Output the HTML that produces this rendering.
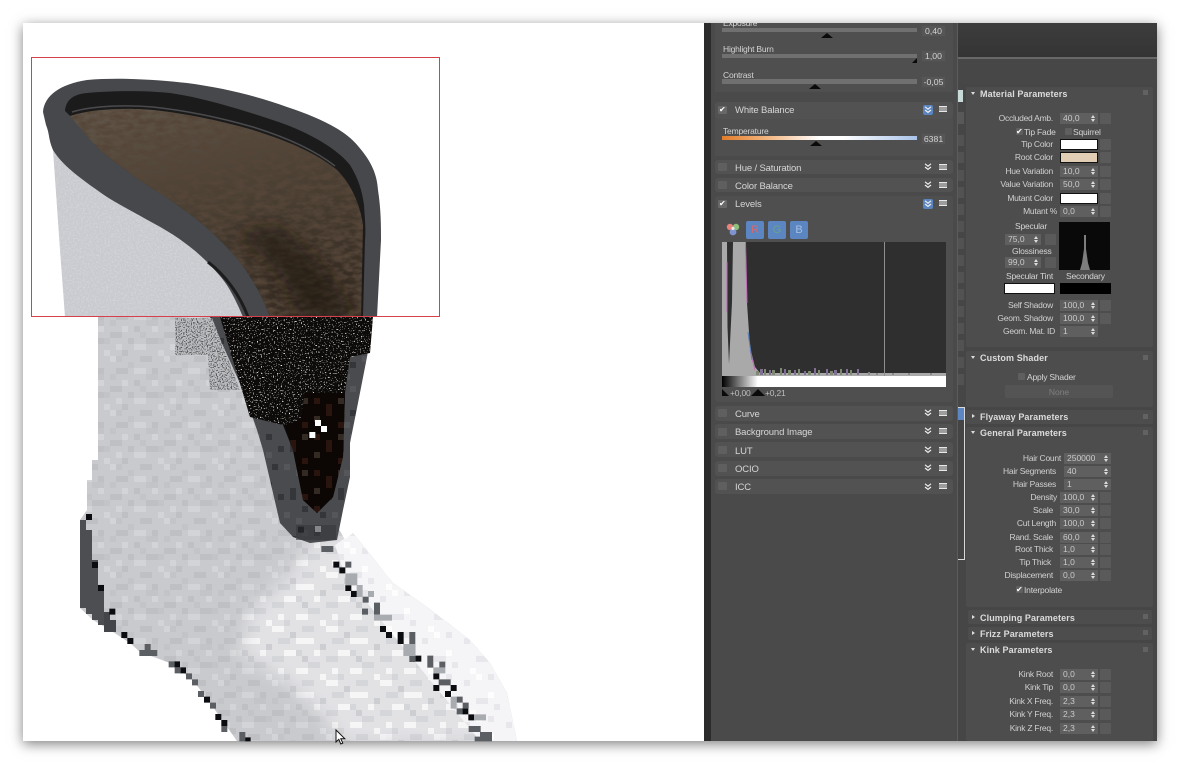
<!DOCTYPE html>
<html><head><meta charset="utf-8"><style>
html,body{margin:0;padding:0;background:#fff;width:1180px;height:765px;overflow:hidden}
#w{position:absolute;left:23px;top:23px;width:1134px;height:718px;box-shadow:0 3px 12px rgba(0,0,0,.5);background:#fff}
#r{position:absolute;left:0;top:0;width:1180px;height:765px;overflow:hidden;font:9px/12px "Liberation Sans",sans-serif;color:#d8d8d8}
#r div,#r i,#r b,#r span,#r u{position:absolute;display:block;font-style:normal;text-decoration:none;white-space:nowrap}
.hd{left:715px;width:238px;height:17px;background:#525252;border-radius:3px}
.ck{left:718px;width:9px;height:8px;background:#5f5f5f;border-radius:1px}
.t{left:735px;font-size:9.5px!important;letter-spacing:-.15px;color:#d6d6d6}
.ch{position:absolute;left:924px;width:8px;height:8px}
.ham{left:939px;width:8px;height:6px;background:repeating-linear-gradient(#e8e8e8 0 1.3px,transparent 1.3px 2.3px)}
.act{left:923px;width:10px;height:10px;background:#5b85bf;border-radius:2px}
.sl{left:722px;width:195px;height:4.5px;background:#707070}
.v{left:921px;width:25px;height:12px;background:#565656;border:1px solid #505050;box-sizing:border-box;text-align:center;line-height:11px!important;font-size:8.7px!important;color:#d4d4d4}
.tr{width:0;height:0;border-left:6px solid transparent;border-right:6px solid transparent;border-bottom:5px solid #0a0a0a}
.lb{color:#d4d4d4;font-size:8.5px!important;letter-spacing:-.2px}
.p{left:966px;width:187px;background:#4d4d4d;border-radius:2px}
.h{left:980px;font-weight:bold;font-size:9px!important;color:#dcdcdc;letter-spacing:.1px}
.a{left:971px;width:0;height:0;border-left:2.5px solid transparent;border-right:2.5px solid transparent;border-top:3px solid #ddd}
.c{left:972px;width:0;height:0;border-top:2.5px solid transparent;border-bottom:2.5px solid transparent;border-left:3px solid #ddd}
.g{left:1143px;width:5px;height:5px;background:#626262}
.l{left:950px;width:103px;text-align:right;color:#d0d0d0;font-size:8.5px!important;letter-spacing:-.25px}
.s{left:1060px;width:38px;height:11px;background:#5f5f5f;color:#cacaca;padding-left:3px;box-sizing:border-box;line-height:11px!important;font-size:8.5px!important}
.s:before{content:"";position:absolute;right:3px;top:2px;border-left:2px solid transparent;border-right:2px solid transparent;border-bottom:3px solid #ddd}
.s:after{content:"";position:absolute;right:3px;top:6px;border-left:2px solid transparent;border-right:2px solid transparent;border-top:3px solid #ddd}
.q{left:1100px;width:11px;height:11px;background:#5a5a5a;border-radius:1px}
.sw{left:1060px;width:36px;height:9px;background:#fff;border:1px solid #111}
.b{width:18px;height:18px;background:#5b86c2;border-radius:2px;text-align:center;line-height:18px!important;font-size:11px!important}
</style></head><body>
<div id="w"></div>
<svg width="1180" height="765" style="position:absolute;left:0;top:0" xmlns="http://www.w3.org/2000/svg">
<defs>
<symbol id="chev" viewBox="0 0 8 8"><path d="M1 .8l3 2.4 3-2.4M1 4l3 2.4 3-2.4" stroke="#eee" stroke-width="1.2" fill="none"/></symbol>
<filter id="fn" x="0" y="0" width="100%" height="100%"><feTurbulence type="fractalNoise" baseFrequency=".09 .2" numOctaves="3" seed="8"/><feColorMatrix values="0 0 0 0 .09  0 0 0 0 .06  0 0 0 0 .04  2.6 0 0 0 -.85"/></filter>
<filter id="gn" x="0" y="0" width="100%" height="100%"><feTurbulence type="fractalNoise" baseFrequency=".6" numOctaves="2" seed="3"/><feColorMatrix values="0 0 0 0 1  0 0 0 0 1  0 0 0 0 1  1.5 0 0 0 -.65"/></filter>
<filter id="sp" x="0" y="0" width="100%" height="100%"><feTurbulence type="fractalNoise" baseFrequency=".75" numOctaves="1" seed="5"/><feColorMatrix values="0 0 0 0 .95  0 0 0 0 .93  0 0 0 0 .88  10 0 0 0 -6.2"/></filter>
<filter id="sw" x="0" y="0" width="100%" height="100%"><feTurbulence type="fractalNoise" baseFrequency=".8" numOctaves="1" seed="9"/><feColorMatrix values="0 0 0 0 .1  0 0 0 0 .1  0 0 0 0 .1  8 0 0 0 -4"/></filter>
<filter id="bl" x="-20%" y="-20%" width="140%" height="140%"><feGaussianBlur stdDeviation="9"/></filter>
<pattern id="pa" width="54" height="54" patternUnits="userSpaceOnUse" x="2" y="2">
<rect width="54" height="54" fill="#c9cacd"/>
<path fill="#bfc0c4" d="M0 6h12v6H0zM24 0h6v6h-6zM36 12h12v6H36zM12 24h6v6h-6zM30 30h12v6H30zM6 42h12v6H6zM42 42h6v6h-6zM18 12h6v6h-6z"/>
<path fill="#d3d4d7" d="M12 0h6v6h-6zM42 0h6v6h-6zM24 18h12v6H24zM0 30h6v6H0zM48 24h6v6h-6zM24 42h12v6H24zM6 18h6v6H6z"/>
<path fill="#c3c4c8" d="M30 6h6v6h-6zM6 30h6v6H6zM18 36h6v6h-6zM36 48h12v6H36zM48 12h6v6h-6zM0 48h6v6H0z"/>
</pattern>
<pattern id="pb" width="54" height="54" patternUnits="userSpaceOnUse" x="2" y="2">
<rect width="54" height="54" fill="#e2e2e5"/>
<path fill="#d5d6d9" d="M0 6h12v6H0zM24 0h6v6h-6zM36 12h12v6H36zM12 24h6v6h-6zM30 30h12v6H30zM6 42h12v6H6z"/>
<path fill="#f6f6f7" d="M12 0h12v6H12zM42 0h6v6h-6zM24 18h12v6H24zM0 30h12v6H0zM48 24h6v6h-6zM24 42h18v6H24zM6 18h6v6H6z"/>
<path fill="#cdced2" d="M30 6h6v6h-6zM18 36h6v6h-6zM48 48h6v6h-6z"/>
</pattern>
<pattern id="pe" width="42" height="42" patternUnits="userSpaceOnUse" x="2" y="2">
<rect width="42" height="42" fill="#f5f5f7"/>
<path fill="#e8e8ec" d="M0 6h6v6H0zM24 0h6v6h-6zM12 24h12v6H12zM30 30h6v6h-6z"/>
<path fill="#fdfdfd" d="M12 0h6v6h-6zM24 18h6v6h-6zM6 36h6v6H6z"/>
</pattern>
<pattern id="pc" width="48" height="48" patternUnits="userSpaceOnUse" x="2" y="2">
<rect width="48" height="48" fill="#4a4b4e"/>
<path fill="#35363a" d="M0 6h6v12H0zM24 0h6v6h-6zM36 12h6v6h-6zM12 24h6v6h-6zM30 30h6v6h-6z"/>
<path fill="#55565a" d="M12 0h6v6h-6zM24 18h6v6h-6zM6 36h6v6H6zM42 30h6v6h-6z"/>
</pattern>
<pattern id="pd" width="36" height="36" patternUnits="userSpaceOnUse" x="2" y="2">
<rect width="36" height="36" fill="#0c0605"/>
<path fill="#2a150e" d="M0 6h6v12H0zM24 0h6v6h-6zM12 24h6v6h-6z"/>
<path fill="#332a24" d="M12 0h6v6h-6zM24 18h6v6h-6z"/>
</pattern>
<linearGradient id="fg" x1="0" y1="0" x2=".35" y2="1"><stop offset="0" stop-color="#62574a"/><stop offset=".45" stop-color="#4e4336"/><stop offset="1" stop-color="#3a2f25"/></linearGradient>
<clipPath id="cf"><path d="M70 116C95 108 130 108 153 110C190 114 225 122 253 130C285 140 315 152 337 170C352 185 360 205 363 225L361 317L270 317C262 295 253 280 240 262C225 244 205 224 180 207C160 192 142 183 130 173C115 162 105 155 97 147C85 135 78 125 70 116Z"/></clipPath>
<clipPath id="cl"><path d="M53 150L97 175L153 205L220 260L250 317H65L60 250Z"/></clipPath>
<clipPath id="cb"><path d="M220 317L250 417L283 425L293 450L303 500L317 513L333 497L343 457L345 393L350 357L370 353L373 317Z"/></clipPath>
<clipPath id="cw"><path d="M175 318V355H208L210 390H240L212 318Z"/></clipPath>
<clipPath id="boot"><path d="M98 317H220L345 540L353 533L377 563L393 583L427 607L470 640L490 663L507 693L517 741H237L227 727L210 703L193 680L170 663L140 652L130 643L113 632L93 620L80 608V520L87 510V480L92 480V460L98 460Z"/></clipPath>
<mask id="lm" maskUnits="userSpaceOnUse" x="180" y="500" width="360" height="260"><rect x="180" y="500" width="360" height="260" fill="#000"/><path fill="#fff" filter="url(#bl)" d="M305 545L360 525L530 700V745H345L320 715L285 680L240 655L250 610L290 575Z"/></mask>
</defs>
<!-- lower boot -->
<path fill="url(#pa)" d="M98 317H220L345 540L353 533L377 563L393 583L427 607L470 640L490 663L507 693L517 741H237L227 727L210 703L193 680L170 663L140 652L130 643L113 632L93 620L80 608V520L87 510V480L92 480V460L98 460Z"/>
<g clip-path="url(#boot)"><rect x="180" y="500" width="360" height="260" fill="url(#pb)" mask="url(#lm)"/>
<path fill="url(#pe)" d="M335 545L353 533L377 563L393 583L427 607L470 640L490 663L507 693L517 741H480L430 680L385 625L345 575Z"/></g>
<path fill="url(#pc)" d="M210 317L243 390L257 430L263 450L273 493L280 523L293 537L310 543L337 540L343 510L350 477L350 443L357 408L367 357L373 317Z"/>
<g clip-path="url(#cb)"><rect x="215" y="317" width="160" height="230" fill="#0d0b0a"/><rect x="215" y="317" width="160" height="108" filter="url(#sp)"/></g>
<path fill="url(#pd)" d="M285 425L293 450L303 500L317 513L333 497L343 457L345 393L305 393L300 420Z"/>
<g clip-path="url(#cw)"><rect x="170" y="317" width="75" height="75" fill="#bdbec2"/><rect x="170" y="317" width="75" height="75" filter="url(#sw)"/></g>
<path fill="#4d4e51" d="M80 520h6v88h-6zM86 530h6v84h-6zM92 560h6v60h-6zM98 585h6v40h-6z"/>
<path fill="#44454a" d="M104 612h6v20h-6zM110 620h6v12h-6z"/>
<!-- seam pixels (zoom coords) -->
<g transform="translate(60 510) scale(.33333)">
<path fill="#0a0c10" d="M78 12h18v18H78zM96 156h18v18H96zM114 225h18v18h-18zM148 296h18v18h-18zM184 366h18v18h-18zM202 384h18v18h-18zM342 454h18v18h-18zM360 472h18v18h-18zM432 560h18v18h-18zM466 612h18v18h-18zM484 630h18v18h-18zM554 682h18v12h-18zM820 155h18v18h-18zM838 172h18v18h-18zM856 225h18v18h-18zM873 243h18v18h-18zM960 348h18v18h-18zM978 366h18v18h-18zM1013 366h18v36h-18zM1066 437h18v18h-18zM1120 490h18v18h-18zM1120 525h18v18h-18zM1155 543h18v18h-18zM1172 525h18v18h-18zM1207 595h18v18h-18zM1225 613h18v18h-18zM714 50h18v18h-18z"/>
<path fill="#5b5e63" d="M254 402h18v18h-18zM238 420h54v18h-54zM326 454h18v18h-18zM344 472h18v18h-18zM378 490h18v18h-18zM396 508h18v18h-18zM414 543h18v18h-18zM450 578h18v18h-18zM484 648h18v18h-18zM538 666h18v28h-18zM856 155h18v18h-18zM908 260h18v18h-18zM942 278h18v36h-18zM906 296h18v18h-18zM1048 366h18v54h-18zM1048 420h18v36h-18zM1102 437h18v36h-18zM1138 455h18v18h-18zM1136 508h36v18h-36zM1190 560h18v18h-18zM1208 578h18v18h-18zM1190 595h18v18h-18zM1226 648h36v18h-36zM1260 666h36v28h-36zM1244 680h18v14h-18zM784 108h36v18h-36z"/>
<path fill="#a8abb0" d="M856 190h36v36h-36zM890 225h18v36h-18zM924 243h18v18h-18zM942 314h36v18h-36zM978 314h18v18h-18zM1030 402h36v36h-36zM1120 472h36v18h-36zM1172 560h18v36h-18zM1242 613h36v18h-36z"/>
</g>
<g transform="translate(60 310) scale(.33333)">
<path fill="#fff" d="M765 330h18v18h-18zM783 348h18v18h-18zM748 366h18v18h-18zM765 648h18v18h-18z"/>
</g>
<path fill="#36373a" d="M296 525h40v15h-40z" opacity=".6"/>
<!-- upper boot -->
<path fill="#c9cacf" d="M53 150L97 175L153 205L220 260L250 317H65L60 250Z"/>
<g clip-path="url(#cl)"><rect x="50" y="145" width="210" height="175" filter="url(#gn)" opacity=".42"/></g>
<path fill="#47484b" d="M43 112C44 96 60 84 87 80C120 77 160 80 187 83C225 88 260 97 287 107C320 118 345 130 358 146C372 162 377 175 378 190C381 210 381 225 381 240L377 317L243 317C235 298 228 285 220 276C205 258 185 240 153 223C130 210 110 200 97 190C80 178 62 165 53 150C48 138 50 135 46 125Z"/>
<path fill="#1b1b1c" d="M65 111C66 98 76 94 87 93C120 90 150 91 170 93C205 98 250 112 287 125C315 136 338 150 350 165C358 178 362 190 364 205C365 220 366 230 365 240L363 317L270 317C262 295 253 280 240 262C225 244 205 224 180 207C160 192 142 183 130 173C115 162 105 155 97 147C85 135 75 120 65 111Z"/>
<path fill="none" stroke="#4b4b4d" stroke-width="1.5" d="M72 112C95 105 130 105 153 107C190 111 225 119 253 127C282 136 312 148 335 166"/>
<path fill="url(#fg)" d="M70 116C95 108 130 108 153 110C190 114 225 122 253 130C285 140 315 152 337 170C352 185 360 205 363 225L361 317L270 317C262 295 253 280 240 262C225 244 205 224 180 207C160 192 142 183 130 173C115 162 105 155 97 147C85 135 78 125 70 116Z"/>
<g clip-path="url(#cf)"><rect x="65" y="105" width="305" height="215" filter="url(#fn)"/><path fill="#1f1711" opacity=".6" filter="url(#bl)" d="M235 235C265 255 285 275 300 320H350C345 290 320 255 275 225Z"/></g>
<path fill="none" stroke="#1c1c1d" stroke-width="3" d="M208 262C225 275 240 295 248 317"/>
<!-- red box -->
<rect x="31.5" y="57.5" width="408" height="259" fill="none" stroke="#d6404a" stroke-width="1"/>
<path d="M336 730v12l2.8-2.6 2 4.6 2-.9-2-4.4h4z" fill="#fff" stroke="#111" stroke-width="1"/>
</svg>
<div id="r">
<!-- panel backgrounds -->
<div style="left:704px;top:23px;width:7px;height:718px;background:#2b2b2b"></div>
<div style="left:711px;top:23px;width:246px;height:718px;background:#4a4a4a"></div>
<div style="left:957px;top:23px;width:1.5px;height:718px;background:#6a5848"></div>
<div style="left:958px;top:23px;width:199px;height:718px;background:#464646"></div>
<div style="left:958px;top:23px;width:199px;height:34px;background:linear-gradient(#3d3d3d,#343434)"></div>
<div style="left:958px;top:57px;width:199px;height:2px;background:#686868"></div>
<div style="left:958px;top:59px;width:199px;height:25px;background:#474747"></div>
<!-- left column strip -->
<div style="left:958px;top:90px;width:5px;height:12px;background:#c7dcd8"></div>
<div style="left:958px;top:112px;width:6px;height:12px;background:#585858"></div>
<div style="left:958px;top:135px;width:6px;height:11px;background:#525252"></div>
<div style="left:958px;top:152px;width:6px;height:11px;background:#525252"></div>
<div style="left:958px;top:170px;width:6px;height:11px;background:#525252"></div>
<div style="left:958px;top:187px;width:6px;height:11px;background:#525252"></div>
<div style="left:958px;top:204px;width:6px;height:11px;background:#525252"></div>
<div style="left:958px;top:221px;width:6px;height:11px;background:#525252"></div>
<div style="left:958px;top:238px;width:6px;height:11px;background:#525252"></div>
<div style="left:958px;top:255px;width:6px;height:11px;background:#525252"></div>
<div style="left:958px;top:272px;width:6px;height:11px;background:#525252"></div>
<div style="left:958px;top:289px;width:6px;height:11px;background:#525252"></div>
<div style="left:958px;top:306px;width:6px;height:11px;background:#525252"></div>
<div style="left:958px;top:323px;width:6px;height:11px;background:#525252"></div>
<div style="left:958px;top:340px;width:6px;height:11px;background:#525252"></div>
<div style="left:958px;top:357px;width:6px;height:11px;background:#525252"></div>
<div style="left:958px;top:374px;width:6px;height:11px;background:#525252"></div>
<div style="left:958px;top:407px;width:7px;height:153px;border-right:1px solid #d8d8d8;border-top:1px solid #d8d8d8;border-bottom:1px solid #d8d8d8;box-sizing:border-box;background:#444"></div>
<div style="left:958px;top:408px;width:6px;height:12px;background:#5b86c2"></div>

<!-- left: sliders -->
<div style="left:715px;top:23px;width:238px;height:69px;background:#4f4f4f"></div>
<div class="lb" style="left:723px;top:17px;clip-path:inset(6px 0 0 0)">Exposure</div>
<div class="sl" style="top:27.5px"></div><div class="v" style="top:25px">0,40</div><div class="tr" style="left:821px;top:33px"></div>
<div class="lb" style="left:723px;top:43px">Highlight Burn</div>
<div class="sl" style="top:53.5px"></div><div class="v" style="top:50px">1,00</div><div class="tr" style="left:912px;top:58px;border-left-width:5px;border-right-width:0"></div>
<div class="lb" style="left:723px;top:69px">Contrast</div>
<div class="sl" style="top:79px"></div><div class="v" style="top:76px">-0,05</div><div class="tr" style="left:809px;top:84px"></div>

<div class="hd" style="top:102px"></div>
<div style="left:715px;top:119px;width:238px;height:37px;background:#4f4f4f"></div>
<div class="ck" style="top:106px;background:#686868"></div><div style="left:719px;top:104px;color:#fff;font-size:8px">✔</div>
<div class="t" style="top:105px">White Balance</div>
<div class="act" style="top:105px"></div><svg class="ch" style="top:106px"><use href="#chev" width="8" height="8"/></svg><div class="ham" style="top:106px"></div>
<div class="lb" style="left:723px;top:125px">Temperature</div>
<div style="left:722px;top:136px;width:195px;height:4px;background:linear-gradient(90deg,#e27c2c,#f2b27a 22%,#fff 50%,#fff 62%,#a9c3ea 100%)"></div>
<div class="v" style="top:133px">6381</div><div class="tr" style="left:810px;top:141px"></div>

<div class="hd" style="top:160px;height:14px"></div>
<div class="ck" style="top:163px"></div><div class="t" style="top:163px">Hue / Saturation</div><svg class="ch" style="top:163px"><use href="#chev" width="8" height="8"/></svg><div class="ham" style="top:164px"></div>
<div class="hd" style="top:178px;height:14px"></div>
<div class="ck" style="top:181px"></div><div class="t" style="top:181px">Color Balance</div><svg class="ch" style="top:181px"><use href="#chev" width="8" height="8"/></svg><div class="ham" style="top:182px"></div>
<div class="hd" style="top:196px;height:206px;background:#4f4f4f"></div>
<div class="ck" style="top:200px;background:#686868"></div><div style="left:719px;top:198px;color:#fff;font-size:8px">✔</div>
<div class="t" style="top:199px">Levels</div>
<div class="act" style="top:199px"></div><svg class="ch" style="top:200px"><use href="#chev" width="8" height="8"/></svg><div class="ham" style="top:200px"></div>
<svg style="position:absolute;left:725px;top:222px" width="16" height="15"><circle cx="5" cy="5" r="3.2" fill="#e9837d"/><circle cx="11" cy="5" r="3.2" fill="#8dc07a"/><circle cx="8" cy="10" r="3.4" fill="#7f93cf"/><circle cx="8" cy="6.5" r="1.6" fill="#e8e8e8"/></svg>
<div class="b" style="left:746px;top:221px;color:#d46a6f">R</div>
<div class="b" style="left:768px;top:221px;color:#67a38a">G</div>
<div class="b" style="left:790px;top:221px;color:#a5bfe0">B</div>
<svg style="position:absolute;left:722px;top:242px" width="224" height="146">
<rect width="224" height="134" fill="#2f2f2f"/>
<path fill="#a9a9a9" d="M0 0H5L5.500 85L7 122L10 60L11 0H23L25 61L28 105L33 125L38 131H224V134H0Z"/>
<path fill="none" stroke="#c36cb6" stroke-width="1" d="M23.500 0L25 61M5 20V70M28 108L33 128"/>
<path fill="none" stroke="#5b7fb8" stroke-width="1" d="M26 90L30 118"/>
<path fill="#7d8a6f" d="M34 129h3v4h-3zM42 127h2v6h-2zM50 128h3v5h-3zM58 126h2v7h-2zM66 128h3v5h-3zM76 127h2v6h-2zM86 129h3v4h-3zM96 128h2v5h-2zM108 129h3v4h-3zM118 127h2v6h-2zM128 128h2v5h-2z"/>
<path fill="#7f6f95" d="M38 127h3v6h-3zM47 128h2v5h-2zM62 127h2v6h-2zM72 128h2v5h-2zM82 129h2v4h-2zM92 126h2v7h-2zM104 127h2v6h-2zM112 128h3v5h-3zM124 127h2v6h-2zM135 127h2v6h-2z"/>
<path fill="#8a8a8a" d="M146 130h2v3h-2zM154 131h2v2h-2zM170 131h2v2h-2zM186 131h2v2h-2zM208 131h2v2h-2z"/>
<rect x="162" y="0" width="1" height="134" fill="#8e8e8e"/>
<defs><linearGradient id="gr"><stop offset="0" stop-color="#000"/><stop offset=".16" stop-color="#fff"/></linearGradient></defs>
<rect y="134" width="224" height="11" fill="url(#gr)"/>
</svg>
<div class="tr" style="left:722px;top:389px;border-left-width:0;border-right:7px solid transparent;border-bottom:7px solid #0a0a0a"></div>
<div class="lb" style="left:730px;top:387px;color:#bdbdbd">+0,00</div>
<div class="tr" style="left:751px;top:389px;border-left-width:7px;border-right-width:7px;border-bottom-width:7px"></div>
<div class="lb" style="left:765px;top:387px;color:#bdbdbd">+0,21</div>

<div class="hd" style="top:406px;height:15px"></div><div class="ck" style="top:409px"></div><div class="t" style="top:409px">Curve</div><svg class="ch" style="top:409px"><use href="#chev" width="8" height="8"/></svg><div class="ham" style="top:410px"></div>
<div class="hd" style="top:424px;height:15px"></div><div class="ck" style="top:428px"></div><div class="t" style="top:427px">Background Image</div><svg class="ch" style="top:427px"><use href="#chev" width="8" height="8"/></svg><div class="ham" style="top:428px"></div>
<div class="hd" style="top:442px;height:15px"></div><div class="ck" style="top:446px"></div><div class="t" style="top:446px">LUT</div><svg class="ch" style="top:446px"><use href="#chev" width="8" height="8"/></svg><div class="ham" style="top:447px"></div>
<div class="hd" style="top:461px;height:15px"></div><div class="ck" style="top:464px"></div><div class="t" style="top:464px">OCIO</div><svg class="ch" style="top:464px"><use href="#chev" width="8" height="8"/></svg><div class="ham" style="top:465px"></div>
<div class="hd" style="top:479px;height:15px"></div><div class="ck" style="top:482px"></div><div class="t" style="top:482px">ICC</div><svg class="ch" style="top:483px"><use href="#chev" width="8" height="8"/></svg><div class="ham" style="top:483px"></div>

<!-- right panels -->
<div class="p" style="top:87px;height:260px"></div>
<div class="a" style="top:92px"></div><div class="h" style="top:88px">Material Parameters</div><div class="g" style="top:90px"></div>
<div class="l" style="top:112px">Occluded Amb.</div><div class="s" style="top:113px">40,0</div><div class="q" style="top:113px"></div>
<div class="ck" style="left:1016px;top:128px;width:7px;height:7px"></div><div style="left:1016px;top:126px;color:#fff;font-size:8px">✔</div><div class="lb" style="left:1024px;top:126px">Tip Fade</div>
<div class="ck" style="left:1065px;top:128px;width:7px;height:7px"></div><div class="lb" style="left:1073px;top:126px">Squirrel</div>
<div class="l" style="top:138px">Tip Color</div><div class="sw" style="top:139px"></div>
<div class="q" style="top:139px"></div>
<div class="l" style="top:151px">Root Color</div><div class="sw" style="top:152px;background:#e2cdb5"></div><div class="q" style="top:152px"></div>
<div class="l" style="top:165px">Hue Variation</div><div class="s" style="top:166px">10,0</div><div class="q" style="top:166px"></div>
<div class="l" style="top:178px">Value Variation</div><div class="s" style="top:179px">50,0</div><div class="q" style="top:179px"></div>
<div class="l" style="top:192px">Mutant Color</div><div class="sw" style="top:193px"></div><div class="q" style="top:193px"></div>
<div class="l" style="top:205px;width:107px">Mutant %</div><div class="s" style="top:206px">0,0</div><div class="q" style="top:206px"></div>
<div class="lb" style="left:1015px;top:220px">Specular</div>
<div class="s" style="left:1005px;top:234px;width:36px">75,0</div><div class="q" style="left:1045px;top:234px"></div>
<div class="lb" style="left:1012px;top:245px">Glossiness</div>
<div class="s" style="left:1005px;top:257px;width:36px">99,0</div><div class="q" style="left:1045px;top:257px"></div>
<div style="left:1059px;top:222px;width:51px;height:48px;background:#090909"></div>
<svg style="position:absolute;left:1059px;top:222px" width="51" height="48"><path fill="#7d7d7d" d="M25 13h2v14l2 14 2 7h-10l2-7 2-14z"/></svg>
<div class="lb" style="left:1006px;top:270px">Specular Tint</div>
<div class="lb" style="left:1066px;top:270px">Secondary</div>
<div style="left:1004px;top:283px;width:49px;height:9px;background:#fff;border:1px solid #111"></div>
<div style="left:1060px;top:283px;width:51px;height:11px;background:#000"></div>
<div class="l" style="top:299px">Self Shadow</div><div class="s" style="top:300px">100,0</div><div class="q" style="top:300px"></div>
<div class="l" style="top:312px">Geom. Shadow</div><div class="s" style="top:313px">100,0</div><div class="q" style="top:313px"></div>
<div class="l" style="top:325px;width:105px">Geom. Mat. ID</div><div class="s" style="top:326px">1</div>

<div class="p" style="top:351px;height:56px"></div>
<div class="a" style="top:356px"></div><div class="h" style="top:352px">Custom Shader</div><div class="g" style="top:355px"></div>
<div class="ck" style="left:1018px;top:373px;width:7px;height:7px"></div><div class="lb" style="left:1027px;top:371px">Apply Shader</div>
<div style="left:1005px;top:385px;width:108px;height:13px;background:#545454;border-radius:2px;text-align:center;line-height:14px;color:#7f7f7f;font-size:8.5px">None</div>

<div class="p" style="top:410px;height:14px"></div>
<div class="c" style="top:414px"></div><div class="h" style="top:411px">Flyaway Parameters</div><div class="g" style="top:414px"></div>
<div class="p" style="top:427px;height:180px"></div>
<div class="a" style="top:431px"></div><div class="h" style="top:427px">General Parameters</div><div class="g" style="top:430px"></div>
<div class="l" style="top:452px;left:958px">Hair Count</div><div class="s" style="left:1064px;width:47px;top:453px">250000</div>
<div class="l" style="top:465px;left:953px">Hair Segments</div><div class="s" style="left:1064px;width:47px;top:466px">40</div>
<div class="l" style="top:478px;left:953px">Hair Passes</div><div class="s" style="left:1064px;width:47px;top:479px">1</div>
<div class="l" style="top:491px;left:954px">Density</div><div class="s" style="top:492px">100,0</div><div class="q" style="top:492px"></div>
<div class="l" style="top:504px">Scale</div><div class="s" style="top:505px">30,0</div><div class="q" style="top:505px"></div>
<div class="l" style="top:517px;left:953px">Cut Length</div><div class="s" style="top:518px">100,0</div><div class="q" style="top:518px"></div>
<div class="l" style="top:531px">Rand. Scale</div><div class="s" style="top:532px">60,0</div><div class="q" style="top:532px"></div>
<div class="l" style="top:543px">Root Thick</div><div class="s" style="top:544px">1,0</div><div class="q" style="top:544px"></div>
<div class="l" style="top:556px;left:948px">Tip Thick</div><div class="s" style="top:557px">1,0</div><div class="q" style="top:557px"></div>
<div class="l" style="top:569px">Displacement</div><div class="s" style="top:570px">0,0</div><div class="q" style="top:570px"></div>
<div class="ck" style="left:1016px;top:586px;width:7px;height:7px"></div><div style="left:1016px;top:584px;color:#fff;font-size:8px">✔</div><div class="lb" style="left:1024px;top:584px">Interpolate</div>

<div class="p" style="top:610px;height:14px;left:968px;width:184px"></div>
<div class="c" style="top:615px"></div><div class="h" style="top:612px">Clumping Parameters</div><div class="g" style="top:614px"></div>
<div class="p" style="top:627px;height:13px;left:968px;width:184px"></div>
<div class="c" style="top:631px"></div><div class="h" style="top:628px">Frizz Parameters</div><div class="g" style="top:630px"></div>
<div class="p" style="top:643px;height:98px"></div>
<div class="a" style="top:648px"></div><div class="h" style="top:644px">Kink Parameters</div><div class="g" style="top:647px"></div>
<div class="l" style="top:668px">Kink Root</div><div class="s" style="top:669px">0,0</div><div class="q" style="top:669px"></div>
<div class="l" style="top:681px">Kink Tip</div><div class="s" style="top:682px">0,0</div><div class="q" style="top:682px"></div>
<div class="l" style="top:695px">Kink X Freq.</div><div class="s" style="top:696px">2,3</div><div class="q" style="top:696px"></div>
<div class="l" style="top:708px">Kink Y Freq.</div><div class="s" style="top:709px">2,3</div><div class="q" style="top:709px"></div>
<div class="l" style="top:722px">Kink Z Freq.</div><div class="s" style="top:723px">2,3</div><div class="q" style="top:723px"></div>
</div>
</body></html>
